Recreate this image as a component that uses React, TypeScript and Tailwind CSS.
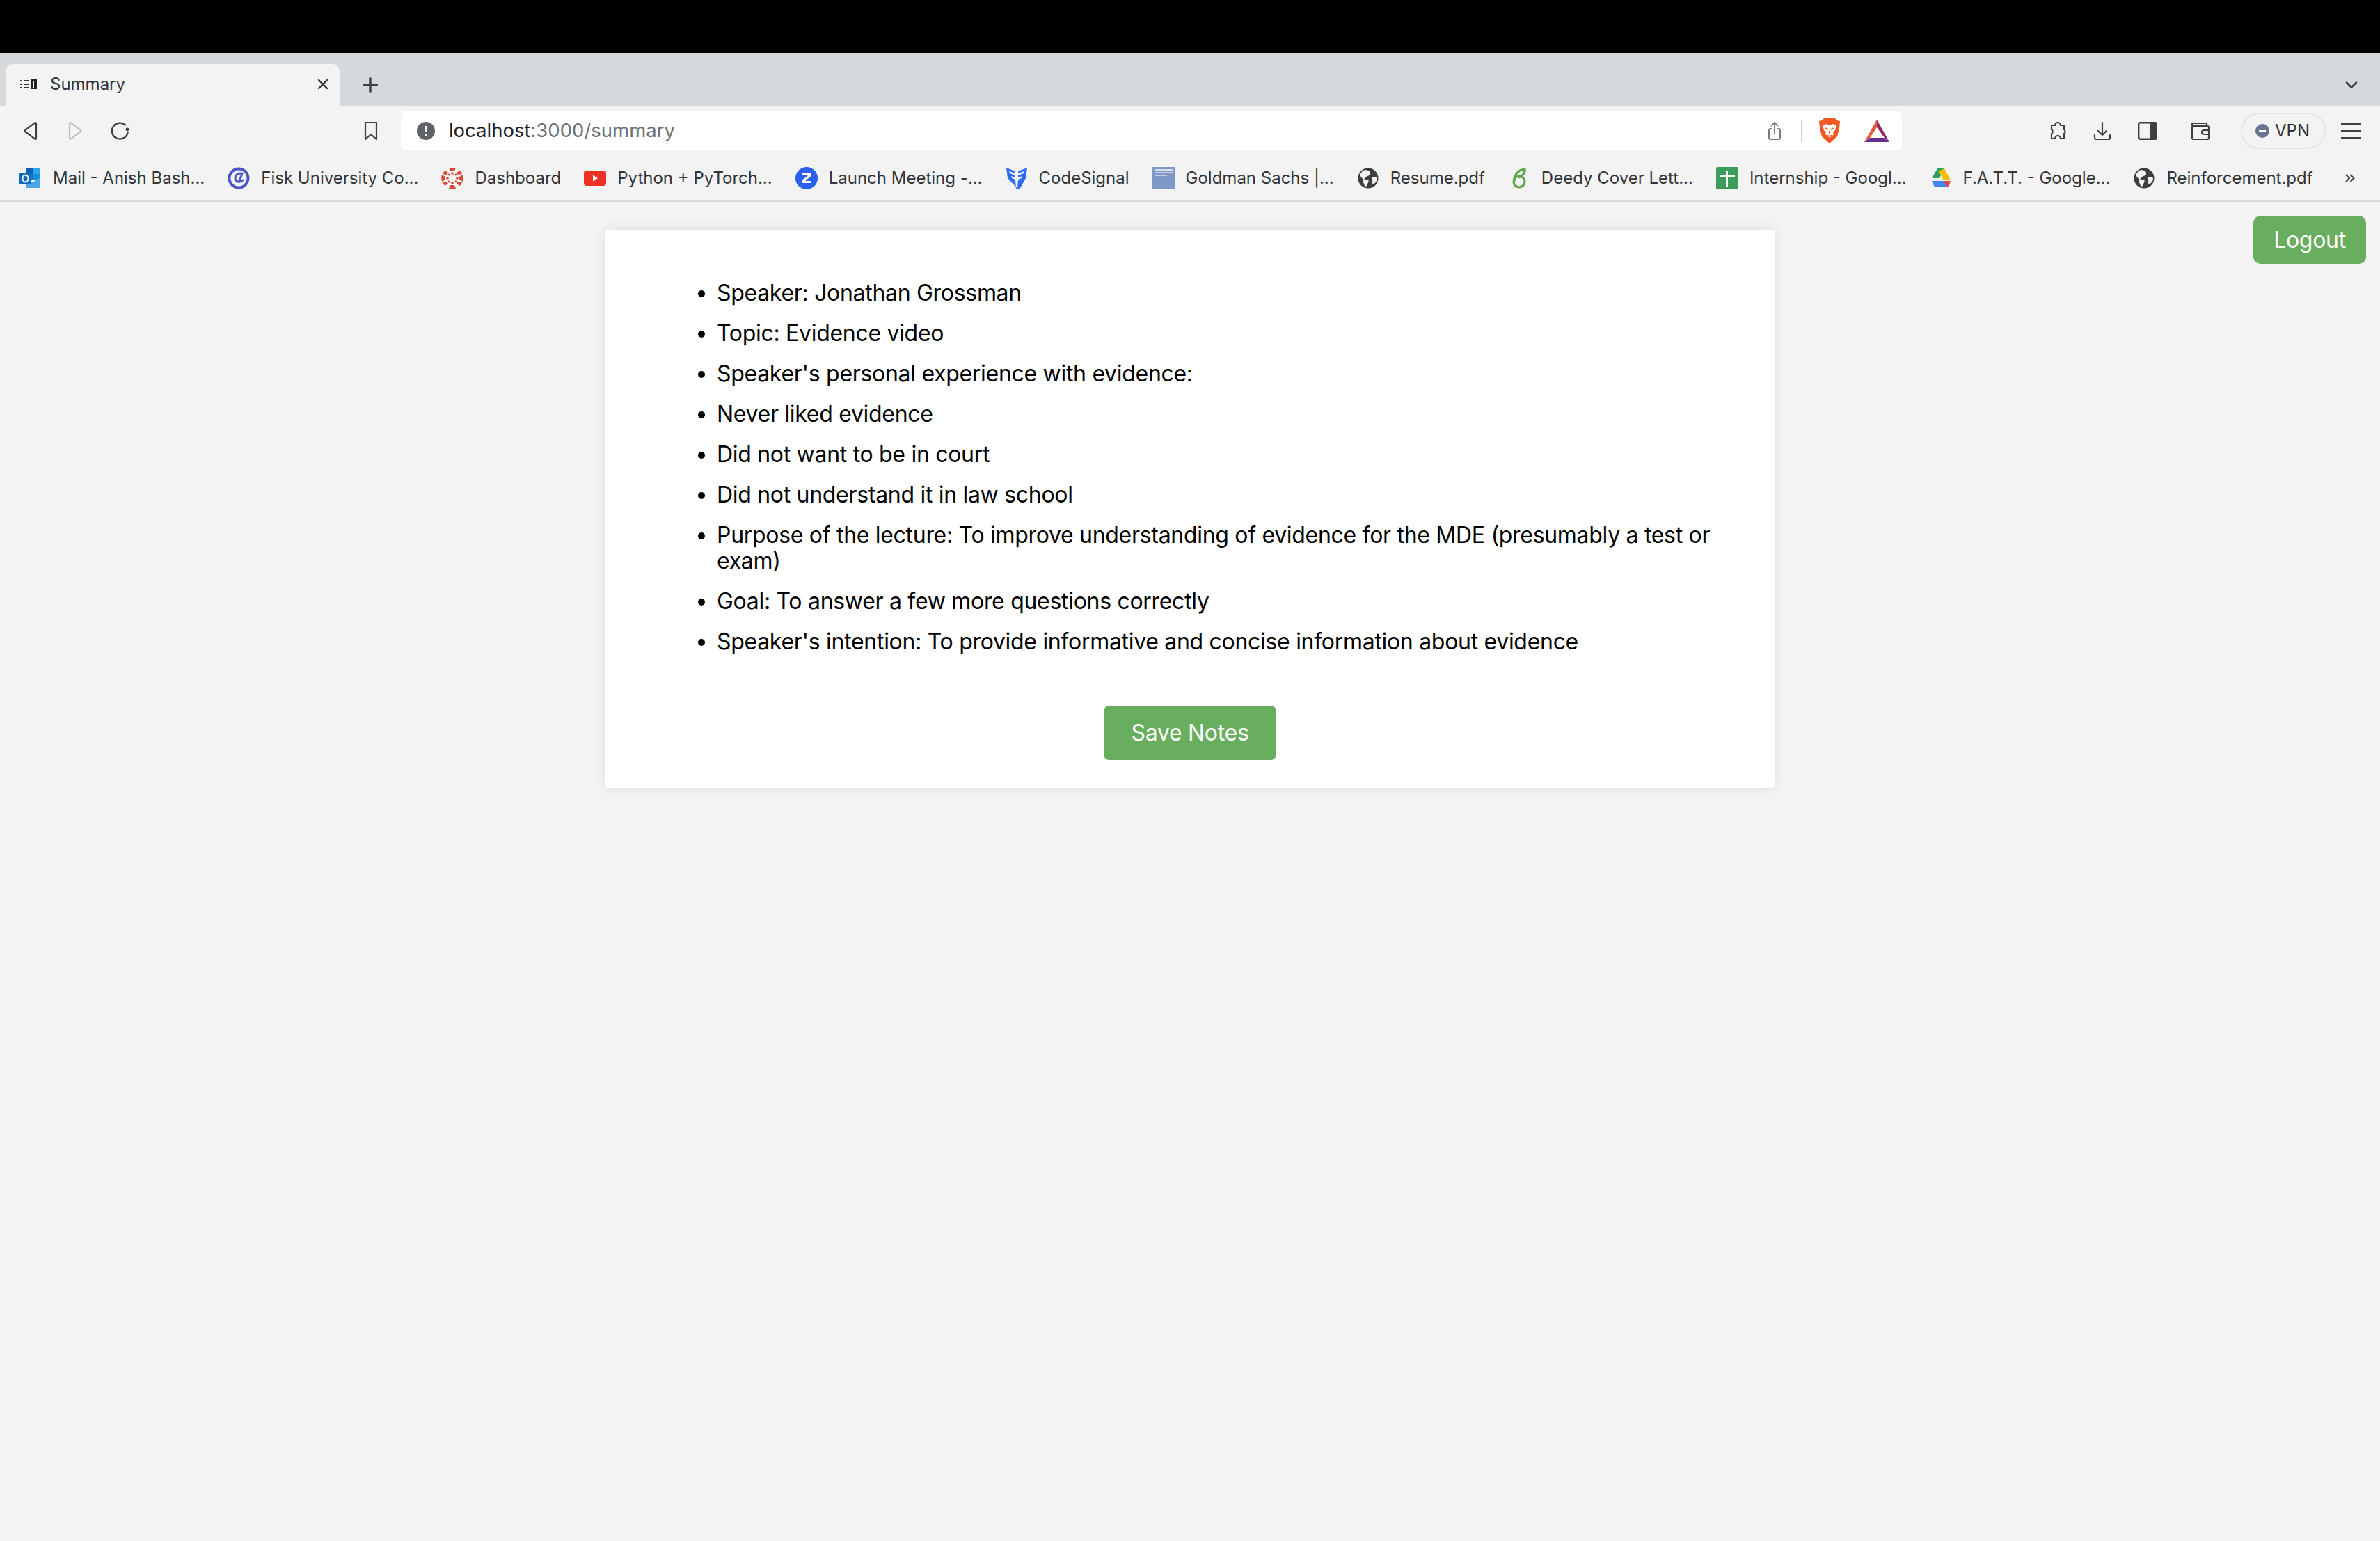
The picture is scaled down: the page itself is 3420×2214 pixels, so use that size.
import React from 'react';
import { X, Plus, ChevronDown, ChevronsRight } from 'lucide-react';

const bulletPoints = [
  'Speaker: Jonathan Grossman',
  'Topic: Evidence video',
  "Speaker's personal experience with evidence:",
  'Never liked evidence',
  'Did not want to be in court',
  'Did not understand it in law school',
  'Purpose of the lecture: To improve understanding of evidence for the MDE (presumably a test or exam)',
  'Goal: To answer a few more questions correctly',
  "Speaker's intention: To provide informative and concise information about evidence",
];

const OutlookIcon = () => (
  <svg viewBox="0 0 32 32" className="w-[32px] h-[32px]">
    <rect x="9" y="2" width="10" height="8" fill="#0f5fb5" />
    <rect x="19" y="2" width="11" height="8" fill="#28a8ea" />
    <rect x="9" y="10" width="10" height="8" fill="#0f78d4" />
    <rect x="19" y="10" width="11" height="8" fill="#1490df" />
    <path d="M9 16l10 6 11-7v15H9z" fill="#4ba8e8" />
    <rect x="0" y="8" width="17" height="17" rx="1.500" fill="#0f6cbd" />
    <ellipse cx="8.5" cy="16.5" rx="4" ry="5" fill="none" stroke="#fff" strokeWidth="2" />
  </svg>
);

const FiskIcon = () => (
  <svg viewBox="0 0 32 32" className="w-[32px] h-[32px]">
    <circle cx="16" cy="16" r="13.5" fill="none" stroke="#4d55c8" strokeWidth="4" />
    <path d="M21 9c-1 4-3 7-3 10M18 9c-4 0-7 3-7 7 0 4 4 6 7 5 2 0 3-1 4-2" fill="none" stroke="#4d55c8" strokeWidth="3" strokeLinecap="round" />
  </svg>
);

const CanvasIcon = () => (
  <svg viewBox="0 0 32 32" className="w-[32px] h-[32px]" fill="#d64a36">
    <path d="M11 1h10l-2 5h-6z" />
    <path d="M11 31h10l-2-5h-6z" />
    <path d="M1 11l5 3v4l-5 3c-1-3-1-7 0-10z" />
    <path d="M31 11l-5 3v4l5 3c1-3 1-7 0-10z" />
    <path d="M5 5l5 3-2 3-6-1z" />
    <path d="M27 5l-5 3 2 3 6-1z" />
    <path d="M5 27l5-3-2-3-6 1z" />
    <path d="M27 27l-5-3 2-3 6 1z" />
    <circle cx="16" cy="9" r="1.800" />
    <circle cx="16" cy="23" r="1.800" />
    <circle cx="9" cy="16" r="1.800" />
    <circle cx="23" cy="16" r="1.800" />
    <circle cx="11" cy="11" r="1.400" />
    <circle cx="21" cy="11" r="1.400" />
    <circle cx="11" cy="21" r="1.400" />
    <circle cx="21" cy="21" r="1.400" />
  </svg>
);

const YoutubeIcon = () => (
  <svg viewBox="0 0 32 32" className="w-[32px] h-[32px]">
    <rect x="0" y="5" width="32" height="22" rx="4" fill="#ee3124" />
    <path d="M13 11.500l7 4.500-7 4.500z" fill="#fff" />
  </svg>
);

const ZoomIcon = () => (
  <svg viewBox="0 0 32 32" className="w-[32px] h-[32px]">
    <circle cx="16" cy="16" r="16" fill="#2a5ff0" />
    <path d="M9 9h14v3.500L14 20h9v3H9v-3.500L18 12H9z" fill="#fff" />
  </svg>
);

const CodeSignalIcon = () => (
  <svg viewBox="0 0 32 32" className="w-[32px] h-[32px]" fill="#2f6bf5">
    <path d="M1 1l13 5v3L5 6l1 3 8 3v3L8 13l1 3 5 2 1 14h2l1-14 5-2 1-3-6 2v-3l8-3 1-3-9 3V6l13-5-2 15-9 16h-2L3 16z" />
  </svg>
);

const GoldmanIcon = () => (
  <svg viewBox="0 0 32 32" className="w-[32px] h-[32px]">
    <rect x="0" y="0" width="32" height="32" fill="#7e99c6" />
    <rect x="3" y="3" width="26" height="2" fill="#d5deed" />
    <rect x="3" y="7" width="26" height="2" fill="#c3d0e4" />
    <rect x="3" y="11" width="18" height="2" fill="#c3d0e4" />
  </svg>
);

const PdfGlobeIcon = () => (
  <svg viewBox="0 0 32 32" className="w-[32px] h-[32px]">
    <circle cx="16" cy="16" r="14.5" fill="#3c4043" />
    <path d="M12 4c5 1 8 3 7 6s-6 3-8 6 3 3 5 3-1 6-3 9c-3-1-4-6-4-9S3 14 5 10s4-5 7-6z" fill="#f3f3f3" />
    <path d="M24 14c3 0 5 1 5 3s-3 7-6 8c-2-3 0-5-1-7s0-4 2-4z" fill="#f3f3f3" />
  </svg>
);

const OverleafIcon = () => (
  <svg viewBox="0 0 32 32" className="w-[32px] h-[32px]" fill="none" stroke="#5da544" strokeWidth="3.2">
    <circle cx="16" cy="21" r="8" />
    <path d="M9 21C8 12 14 4 24 3c1 5-3 10-9 12" />
  </svg>
);

const SheetsIcon = () => (
  <svg viewBox="0 0 32 32" className="w-[32px] h-[32px]">
    <rect x="0" y="0" width="32" height="32" rx="2" fill="#3d9c5c" />
    <rect x="5" y="11" width="22" height="3" fill="#fff" />
    <rect x="14" y="5" width="3" height="23" fill="#fff" />
  </svg>
);

const DriveIcon = () => (
  <svg viewBox="0 0 32 32" className="w-[32px] h-[32px]">
    <path d="M11 2h10l-7 14H3z" fill="#2aa561" />
    <path d="M21 2l9 17H20l-7-13z" fill="#fbbc04" />
    <path d="M3 20h27l-4 9H7z" fill="#4285f4" />
    <path d="M30 20l-4 9-6-9z" fill="#ea4335" />
  </svg>
);

const bookmarks = [
  { label: 'Mail - Anish Bash...', icon: <OutlookIcon /> },
  { label: 'Fisk University Co...', icon: <FiskIcon /> },
  { label: 'Dashboard', icon: <CanvasIcon /> },
  { label: 'Python + PyTorch...', icon: <YoutubeIcon /> },
  { label: 'Launch Meeting -...', icon: <ZoomIcon /> },
  { label: 'CodeSignal', icon: <CodeSignalIcon /> },
  { label: 'Goldman Sachs |...', icon: <GoldmanIcon /> },
  { label: 'Resume.pdf', icon: <PdfGlobeIcon /> },
  { label: 'Deedy Cover Lett...', icon: <OverleafIcon /> },
  { label: 'Internship - Googl...', icon: <SheetsIcon /> },
  { label: 'F.A.T.T. - Google...', icon: <DriveIcon /> },
  { label: 'Reinforcement.pdf', icon: <PdfGlobeIcon /> },
];

const TabStrip = () => (
  <div className="h-[76px] bg-[#d5d9dc] flex items-end pl-[8px] pr-[27px]">
    <div className="w-[480px] h-[60px] bg-[#f3f3f3] rounded-t-[10px] flex items-center pl-[21px] pr-[12px] pb-[2px]">
      <svg viewBox="0 0 24 14" className="w-[24px] h-[14px]">
        <rect x="0" y="1" width="3" height="2" fill="#333" />
        <rect x="0" y="6" width="3" height="2" fill="#333" />
        <rect x="0" y="11" width="3" height="2" fill="#333" />
        <rect x="5" y="1" width="8" height="2" fill="#333" />
        <rect x="5" y="6" width="8" height="2" fill="#333" />
        <rect x="5" y="11" width="8" height="2" fill="#333" />
        <rect x="15" y="0" width="9" height="14" fill="#222" />
        <rect x="18" y="2" width="2" height="10" fill="#fff" />
      </svg>
      <span className="ml-[19px] text-[24px] text-[#333639]">Summary</span>
      <X className="ml-auto w-[24px] h-[24px] text-[#333639]" strokeWidth={2.4} />
    </div>
    <Plus className="ml-[28px] mb-[14px] w-[32px] h-[32px] text-[#3c4043]" strokeWidth={2.6} />
    <ChevronDown className="ml-auto mb-[16px] w-[28px] h-[28px] text-[#3c4043]" strokeWidth={2.2} />
  </div>
);

const Toolbar = () => (
  <div className="h-[72px] bg-[#f3f3f3] flex items-center pl-[32px] pr-[28px]">
    <svg viewBox="0 0 24 28" className="w-[24px] h-[28px]" fill="none" stroke="#3c4043" strokeWidth="2.2" strokeLinejoin="round">
      <path d="M20 3v22a1 1 0 0 1-1.6.7L4 15a1.3 1.3 0 0 1 0-2L18.4 2.3A1 1 0 0 1 20 3z" />
    </svg>
    <svg viewBox="0 0 24 28" className="ml-[40px] w-[24px] h-[28px]" fill="none" stroke="#bdbfc1" strokeWidth="2.2" strokeLinejoin="round">
      <path d="M4 3v22a1 1 0 0 0 1.6.7L20 15a1.3 1.3 0 0 0 0-2L5.6 2.3A1 1 0 0 0 4 3z" />
    </svg>
    <svg viewBox="0 0 28 28" className="ml-[38px] w-[28px] h-[28px]" fill="none" stroke="#3c4043" strokeWidth="2.4" strokeLinecap="round">
      <path d="M22 5.500A11.500 11.500 0 1 0 25.500 17" />
      <circle cx="25" cy="12" r="2.400" fill="#3c4043" stroke="none" />
    </svg>
    <svg viewBox="0 0 20 28" className="ml-[337px] w-[20px] h-[28px]" fill="none" stroke="#3c4043" strokeWidth="2.2" strokeLinejoin="round">
      <path d="M2 2h16v24l-8-7-8 7z" />
    </svg>
    <div className="ml-[33px] w-[2158px] h-[56px] bg-white rounded-[8px] flex items-center pl-[23px] pr-[18px]">
      <svg viewBox="0 0 26 26" className="w-[26px] h-[26px]">
        <circle cx="13" cy="13" r="13" fill="#5f6368" />
        <rect x="11.5" y="6" width="3" height="9" rx="1" fill="#fff" />
        <circle cx="13" cy="19" r="1.8" fill="#fff" />
      </svg>
      <span className="ml-[20px] text-[27.5px] text-[#202124]">
        localhost<span className="text-[#6d7074]">:3000/summary</span>
      </span>
      <svg viewBox="0 0 20 28" className="ml-auto w-[20px] h-[28px]" fill="none" stroke="#7a7d80" strokeWidth="2" strokeLinecap="round" strokeLinejoin="round">
        <path d="M5.500 11H4a2 2 0 0 0-2 2v11a2 2 0 0 0 2 2h12a2 2 0 0 0 2-2V13a2 2 0 0 0-2-2h-1.500" />
        <path d="M10 18V2M5.500 6.500L10 2l4.500 4.500" />
      </svg>
      <div className="ml-[28px] w-[2px] h-[32px] bg-[#c9cbce]" />
      <svg viewBox="0 0 32 36" className="ml-[23px] w-[32px] h-[36px]">
        <path d="M8 0h16l3 3 4 1-1 11-3 11-11 10L5 26 2 15 1 4l4-1z" fill="#f15a22" />
        <path d="M6 10l5-2 5 2 5-2 5 2-2 7-3 3 1 3-6 5-6-5 1-3-3-3z" fill="#fff" />
        <path d="M10 14l4 2M22 14l-4 2M16 18v5M12 24l4 2 4-2" stroke="#f15a22" strokeWidth="1.800" fill="none" />
      </svg>
      <svg viewBox="0 0 36 32" className="ml-[34px] w-[36px] h-[32px]">
        <path d="M18 0L0 32l8-6L18 11z" fill="#e8583a" />
        <path d="M18 0l18 32-7-6-11-15z" fill="#8e2a63" />
        <path d="M0 32l8-6h20l8 6z" fill="#662d91" />
      </svg>
    </div>
    <svg viewBox="0 0 28 28" className="ml-[210px] w-[28px] h-[28px]" fill="none" stroke="#3c4043" strokeWidth="2.200" strokeLinejoin="round">
      <path d="M10 6a4 4 0 0 1 8 0h5v6a3.500 3.500 0 0 1 0 6v7h-5a4 4 0 0 0-8 0H5v-7a3.500 3.500 0 0 0 0-6V6z" />
    </svg>
    <svg viewBox="0 0 26 28" className="ml-[37px] w-[26px] h-[28px]" fill="none" stroke="#3c4043" strokeWidth="2.200" strokeLinecap="round" strokeLinejoin="round">
      <path d="M13 2v18M7 14l6 6 6-6" />
      <path d="M2 20v4a2 2 0 0 0 2 2h18a2 2 0 0 0 2-2v-4" />
    </svg>
    <svg viewBox="0 0 28 26" className="ml-[38px] w-[28px] h-[26px]">
      <rect x="1.200" y="1.200" width="25.600" height="23.600" rx="2" fill="none" stroke="#3c4043" strokeWidth="2.400" />
      <rect x="17" y="1" width="10" height="24" fill="#3c4043" />
    </svg>
    <svg viewBox="0 0 28 28" className="ml-[48px] w-[28px] h-[28px]" fill="none" stroke="#3c4043" strokeWidth="2.200" strokeLinejoin="round">
      <path d="M3 7a2 2 0 0 1 2-4h18v4" />
      <rect x="2" y="7" width="24" height="19" rx="2" />
      <path d="M26 13h-7a3 3 0 0 0 0 6h7" />
    </svg>
    <div className="ml-[44px] w-[122px] h-[52px] rounded-full border-2 border-[#e3e4e6] flex items-center pl-[19px]">
      <div className="w-[20px] h-[20px] rounded-full bg-[#6b7190] flex items-center justify-center">
        <div className="w-[10px] h-[3px] bg-white" />
      </div>
      <span className="ml-[8px] text-[24px] text-[#303236]">VPN</span>
    </div>
    <div className="ml-[22px] w-[28px] flex flex-col gap-[8px]">
      <div className="h-[2px] bg-[#3c4043]" />
      <div className="h-[2px] bg-[#3c4043]" />
      <div className="h-[2px] bg-[#3c4043]" />
    </div>
  </div>
);

const BookmarksBar = () => (
  <div className="h-[66px] bg-[#f3f3f3] border-b-2 border-[#d6d8da] flex items-center pl-[28px] pr-[32px] gap-[33px]">
    {bookmarks.map((b) => (
      <div key={b.label} className="flex items-center gap-[16px] shrink-0">
        {b.icon}
        <span className="text-[24px] text-[#333639] whitespace-nowrap">{b.label}</span>
      </div>
    ))}
    <ChevronsRight className="ml-auto w-[22px] h-[22px] text-[#3c4043]" strokeWidth={2.2} />
  </div>
);

const App: React.FC = () => {
  return (
    <div className="min-h-[2214px] bg-[#f4f4f4] flex flex-col font-['Inter',sans-serif]">
      <div className="h-[76px] bg-black" />
      <TabStrip />
      <Toolbar />
      <BookmarksBar />

      <div className="grid grid-cols-[1fr_1680px_1fr] tracking-[-0.3px]">
        <div />
        <div className="mt-[40px] bg-white rounded-[4px] shadow-[0_0_20px_rgba(0,0,0,0.1)] px-[80px] py-[40px] flex flex-col items-center">
          <ul className="w-full list-disc pl-[80px] my-[32px] text-[32px] leading-[37px] text-black">
            {bulletPoints.map((point) => (
              <li key={point} className="mb-[21px]">{point}</li>
            ))}
          </ul>
          <button className="mt-[21px] w-[248px] h-[78px] bg-[#69ad5f] text-white text-[32px] rounded-[8px]">
            Save Notes
          </button>
        </div>
        <div className="flex justify-end items-start pr-[20px] pt-[20px]">
          <button className="w-[162px] h-[69px] bg-[#69ad5f] text-white text-[32px] rounded-[10px]">
            Logout
          </button>
        </div>
      </div>
    </div>
  );
};

export default App;
